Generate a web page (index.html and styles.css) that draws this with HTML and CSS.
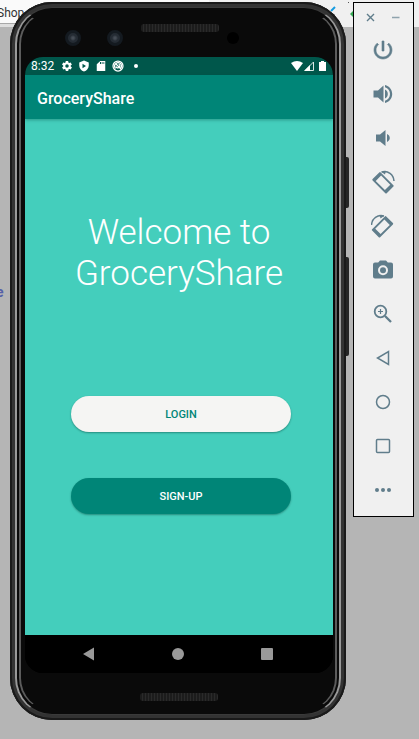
FILE: index.html
```
<!DOCTYPE html>
<html lang="en">
<head>
<meta charset="utf-8">
<meta name="viewport" content="width=device-width, initial-scale=1">
<title>GroceryShare</title>
<link rel="stylesheet" href="styles.css">
</head>
<body>
<div class="desktop">
  <div class="window-bar"><span class="window-tab">Shop</span>
    <svg class="window-marks" width="60" height="28" viewBox="0 0 60 28" aria-hidden="true"><path d="M2 11l4-4" stroke="#159be0" stroke-width="2"/><path d="M21 14l3-3v6z" fill="#35a853"/><path d="M19 2h1v1h-1z" fill="#555"/></svg>
  </div>
  <span class="behind-text">e</span>

  <main class="phone">
    <span class="rim"></span><span class="rim-inner"></span>
    <span class="side-key power-key"></span><span class="side-key volume-key"></span>
    <div class="bezel-top">
      <span class="lens"></span><span class="lens"></span>
      <span class="speaker"></span>
      <span class="sensor"></span>
    </div>
    <div class="screen">
      <div class="status-bar">
        <span class="clock">8:32</span>
        <svg width="12" height="12" viewBox="0 0 24 24"><path fill="#fff" fill-rule="evenodd" d="M19.4 13c0-.3.1-.6.1-1s0-.7-.1-1l2.1-1.600c.2-.2.2-.4.1-.6l-2-3.500c-.1-.2-.4-.3-.6-.2l-2.500 1c-.5-.4-1.100-.7-1.700-1l-.4-2.600c0-.3-.2-.5-.5-.5h-4c-.2 0-.5.2-.5.4l-.4 2.700c-.6.2-1.200.6-1.700 1l-2.500-1c-.2-.1-.5 0-.6.2l-2 3.500c-.1.2-.1.500.1.600L4.500 11v2l-2.100 1.600c-.2.200-.2.400-.1.600l2 3.500c.1.200.4.300.6.200l2.500-1c.5.400 1.100.700 1.700 1l.4 2.600c0 .3.200.5.500.5h4c.2 0 .5-.2.500-.5l.4-2.600c.6-.3 1.200-.6 1.700-1l2.500 1c.2.100.500 0 .600-.2l2-3.500c.100-.2.100-.5-.1-.6zM12 15.500a3.500 3.500 0 1 1 0-7 3.500 3.500 0 0 1 0 7z"/></svg>
        <svg width="12" height="12" viewBox="0 0 24 24"><path fill="#fff" fill-rule="evenodd" d="M12 1L2.500 5v6c0 5.600 4 10.700 9.500 12 5.500-1.300 9.500-6.400 9.500-12V5zM9 7.500l7 4.500-7 4.500z"/></svg>
        <svg width="12" height="12" viewBox="0 0 24 24"><path fill="#fff" fill-rule="evenodd" d="M20.500 2h-10L3.500 8.500V22H20.500V2zM10 4h2v4h-2zM13.500 4h1.500v4h-1.500zM17 4h1.500v4H17z"/></svg>
        <svg width="12" height="12" viewBox="0 0 24 24" fill="none" stroke="#fff" stroke-width="2.500"><circle cx="12" cy="12" r="10"/><path d="M7 17a7 7 0 1 1 9 1M8 8l9 9M8 13a4 4 0 1 0 5-5"/></svg>
        <span class="dot"></span>
        <svg class="signals" width="36" height="12" viewBox="0 0 36 12"><path fill="#fff" d="M0 3Q6-1 12 3L6 11z"/><path fill="none" stroke="#dce9e6" d="M14 10.500L22.500 2v8.500z"/><path fill="#fff" d="M13 11l6-6v6z"/><path fill="#fff" d="M28 2h2V1h3v1h2v9h-7z"/></svg>
      </div>
      <header class="app-bar">GroceryShare</header>
      <section class="welcome">
        <h1>Welcome to GroceryShare</h1>
        <button class="pill login" type="button">LOGIN</button>
        <button class="pill signup" type="button">SIGN-UP</button>
      </section>
      <nav class="nav-bar">
        <button type="button" aria-label="Back"><svg width="14" height="14" viewBox="0 0 14 14"><path fill="#999" d="M12 .5v13L1 7z"/></svg></button>
        <button type="button" aria-label="Home"><svg width="14" height="14" viewBox="0 0 14 14"><circle cx="7" cy="7" r="6" fill="#999"/></svg></button>
        <button type="button" aria-label="Overview"><svg width="14" height="14" viewBox="0 0 14 14"><rect x="1" y="1" width="12" height="12" rx="1" fill="#999"/></svg></button>
      </nav>
    </div>
    <div class="bezel-bottom"><span class="speaker"></span></div>
  </main>

  <aside class="tools">
    <div class="tools-head">
      <button type="button" aria-label="Close"><svg width="9" height="9" viewBox="0 0 9 9"><path d="M1 1l7 7M8 1L1 8" stroke="#607d8b" stroke-width="1.400"/></svg></button>
      <button type="button" aria-label="Minimize"><svg width="9" height="9" viewBox="0 0 9 9"><path d="M1 4.500h7.500" stroke="#8fa3ad" stroke-width="1.500"/></svg></button>
    </div>
    <button type="button" aria-label="Power"><svg viewBox="0 0 24 24"><path stroke="#607d8b" stroke-width=".6" d="M13 3h-2v10h2V3zm4.830 2.170l-1.420 1.420C17.990 7.860 19 9.810 19 12c0 3.870-3.130 7-7 7s-7-3.130-7-7c0-2.190 1.010-4.140 2.580-5.420L6.170 5.170C4.230 6.820 3 9.260 3 12c0 4.970 4.030 9 9 9s9-4.030 9-9c0-2.740-1.230-5.180-3.170-6.830z"/></svg></button>
    <button type="button" aria-label="Volume up"><svg viewBox="0 0 24 24"><path d="M2.500 8.500v7h4.500l5.500 5V3.500L7 8.500zM14 7.500v9c1.800-.8 2.800-2.500 2.800-4.500S15.800 8.300 14 7.500zM14 3v2.200c3 .8 5 3.500 5 6.800s-2 6-5 6.800V21c4.200-.9 7.200-4.600 7.200-9S18.200 3.900 14 3z"/></svg></button>
    <button type="button" aria-label="Volume down"><svg viewBox="0 0 24 24"><path d="M5 8.500v7h4l5.500 4.500V4L9 8.500zM16 8v8c1.700-.8 2.800-2.200 2.800-4S17.700 8.800 16 8z"/></svg></button>
    <button type="button" aria-label="Rotate left"><svg viewBox="0 0 24 24"><path fill-rule="evenodd" transform="rotate(45 12 12.800)" d="M3 7.100h18a1 1 0 0 1 1 1v9.400a1 1 0 0 1-1 1H3a1 1 0 0 1-1-1V8.100a1 1 0 0 1 1-1zM5.500 9v7.600h13V9z"/><path d="M10.500 2C17 .3 22.500 4.500 23 11" fill="none" stroke="#607d8b" stroke-width="1.500"/><path d="M10.500 2L15 .8l-1 3.700z"/></svg></button>
    <button type="button" aria-label="Rotate right"><svg viewBox="0 0 24 24"><g transform="matrix(-1 0 0 1 23.500 0)"><path fill-rule="evenodd" transform="rotate(45 12 12.800)" d="M3 7.100h18a1 1 0 0 1 1 1v9.400a1 1 0 0 1-1 1H3a1 1 0 0 1-1-1V8.100a1 1 0 0 1 1-1zM5.500 9v7.600h13V9z"/><path d="M10.500 2C17 .3 22.500 4.500 23 11" fill="none" stroke="#607d8b" stroke-width="1.500"/><path d="M10.500 2L15 .8l-1 3.700z"/></g></svg></button>
    <button type="button" aria-label="Screenshot"><svg viewBox="0 0 24 24"><path fill-rule="evenodd" d="M9 2.500L7.200 4.500H4a2 2 0 0 0-2 2v12a2 2 0 0 0 2 2h16a2 2 0 0 0 2-2v-12a2 2 0 0 0-2-2h-3.200L15 2.500zM12 7.300a5 5 0 1 1 0 10 5 5 0 0 1 0-10z"/><circle cx="12" cy="12.300" r="3"/></svg></button>
    <button type="button" aria-label="Zoom"><svg viewBox="0 0 24 24" fill="none" stroke="#607d8b"><circle cx="9.500" cy="9.500" r="5.800" stroke-width="1.800"/><path d="M14 14l6 6" stroke-width="2.300"/><path d="M9.500 7v5M7 9.500h5" stroke-width="1.200"/></svg></button>
    <button type="button" aria-label="Back"><svg viewBox="0 0 24 24" fill="none" stroke="#607d8b" stroke-width="1.500"><path d="M17.500 5.500v13L6.500 12z"/></svg></button>
    <button type="button" aria-label="Home"><svg viewBox="0 0 24 24" fill="none" stroke="#607d8b" stroke-width="1.500"><circle cx="12" cy="12" r="6.500"/></svg></button>
    <button type="button" aria-label="Overview"><svg viewBox="0 0 24 24" fill="none" stroke="#607d8b" stroke-width="1.500"><rect x="5.500" y="5.500" width="13" height="13" rx="1"/></svg></button>
    <button type="button" aria-label="More"><svg viewBox="0 0 24 24"><circle cx="6" cy="12" r="2"/><circle cx="12" cy="12" r="2"/><circle cx="18" cy="12" r="2"/></svg></button>
  </aside>
</div>
</body>
</html>
```
FILE: styles.css
```
* { box-sizing: border-box; }

body {
  margin: 0;
  background: #b5b5b5;
  font-family: Roboto, "Liberation Sans", sans-serif;
}

button {
  margin: 0;
  padding: 0;
  border: 0;
  background: none;
  font-family: inherit;
  cursor: pointer;
}

svg { display: block; }

.desktop {
  position: relative;
  display: flex;
  align-items: flex-start;
  gap: 7px;
  min-height: 100vh;
  padding: 2px 5px 19px 10px;
  overflow: hidden;
}

/* Windows showing behind the emulator */
.window-bar {
  position: absolute;
  inset: 0 0 auto 0;
  height: 27px;
  background: linear-gradient(90deg, #fafafa 50%, #f0f0f0 50%);
}
.window-bar::before {
  content: "";
  position: absolute;
  inset: 23px 50% 0 0;
  background: #dedede;
  border-top: 1px solid #a8a8a8;
}
.window-tab {
  position: absolute;
  left: -3px;
  top: 6px;
  color: #333;
  font-size: 12px;
  line-height: 14px;
}
.window-marks {
  position: absolute;
  right: 30px;
  top: 0;
}
.behind-text {
  position: absolute;
  left: -4px;
  top: 284px;
  color: #5560a8;
  font-size: 14px;
  font-weight: 700;
  line-height: 16px;
}

/* Phone body */
.phone {
  position: relative;
  flex: 1;
  min-width: 0;
  padding: 0 13px 0 15px;
  border-radius: 42px;
  background: #0a0a0a;
  box-shadow: inset 0 0 0 2px #1a1a1a, inset 0 0 0 6px #333;
}
.rim, .rim-inner {
  position: absolute;
  border-style: solid;
  pointer-events: none;
}
.rim {
  inset: 5px;
  border-width: 1px 2px;
  border-color: #3a3a3a #999 #3a3a3a #999;
  border-radius: 37px;
  background: #0a0a0a;
}
.rim-inner {
  inset: 9px;
  border-width: 1px 2px;
  border-color: transparent #5c5c5c;
  border-radius: 33px;
}
.side-key {
  position: absolute;
  left: 100%;
  width: 3px;
  border-radius: 0 2px 2px 0;
  background: #252525;
}
.power-key { top: 155px; height: 51px; }
.volume-key { top: 255px; height: 99px; }

.bezel-top {
  position: relative;
  display: grid;
  grid-template-columns: 16px 16px 78px 12px;
  column-gap: 26px;
  align-items: center;
  height: 55px;
  padding: 16px 0 0 40px;
}
.lens {
  width: 16px;
  height: 16px;
  border: 3px solid #141a20;
  border-radius: 50%;
  background: radial-gradient(circle, #454c55 0 1px, #252c34 3px);
}
.speaker {
  height: 8px;
  border-radius: 3px;
  background: repeating-linear-gradient(90deg, #1c1c1c 0 2px, #2a2a2a 2px 3px);
}
.bezel-top .speaker { align-self: start; margin: 6px 8px 0 -8px; width: 78px; }
.sensor {
  width: 12px;
  height: 12px;
  margin-left: -26px;
  border-radius: 50%;
  background: #000;
}
.bezel-bottom {
  position: relative;
  display: flex;
  justify-content: center;
  height: 47px;
  padding-top: 20px;
}
.bezel-bottom .speaker { width: 78px; }

/* Screen */
.screen {
  position: relative;
  overflow: hidden;
  border-radius: 18px;
  background: #000;
}
.status-bar {
  display: flex;
  align-items: center;
  gap: 5px;
  height: 18px;
  padding: 0 6px;
  background: #00574b;
}
.clock {
  width: 25px;
  color: #fff;
  font-size: 12px;
  line-height: 18px;
}
.dot {
  width: 4px;
  height: 4px;
  margin-left: 5px;
  border-radius: 50%;
  background: #fff;
}
.signals { margin-left: auto; }

.app-bar {
  position: relative;
  height: 44px;
  padding: 0 12px;
  background: #008577;
  box-shadow: 0 1px 3px rgba(0, 70, 60, .4);
  color: #fff;
  font-size: 16px;
  font-weight: 500;
  line-height: 48px;
}
.welcome {
  display: flex;
  flex-direction: column;
  padding: 93px 0 121px;
  background: #44cebc;
}
.welcome h1 {
  margin: 0 42px 102px;
  color: #fff;
  font-size: 35px;
  font-weight: 300;
  line-height: 41px;
  text-align: center;
}
.pill {
  height: 36px;
  margin: 0 42px 0 46px;
  border-radius: 18px;
  box-shadow: 0 1px 2px rgba(0, 60, 50, .45);
  font-size: 11px;
  font-weight: 500;
}
.login { background: #f5f5f3; color: #008577; }
.signup { margin-top: 46px; background: #008577; color: #fff; }

.nav-bar {
  display: flex;
  align-items: center;
  justify-content: space-between;
  height: 38px;
  padding: 0 59px 0 57px;
  background: #000;
}

/* Emulator toolbar */
.tools {
  position: relative;
  display: flex;
  flex-direction: column;
  align-items: center;
  gap: 20px;
  width: 61px;
  padding: 10px 2px 14px 0;
  border: 1px solid #000;
  background: #f0f0f0;
}
.tools svg { fill: #607d8b; }
.tools > button svg { width: 24px; height: 24px; }
.tools > button svg[fill="none"] { fill: none; }
.tools-head {
  display: flex;
  gap: 16px;
  height: 9px;
}
.tools-head + button { margin-top: -4px; }
```
